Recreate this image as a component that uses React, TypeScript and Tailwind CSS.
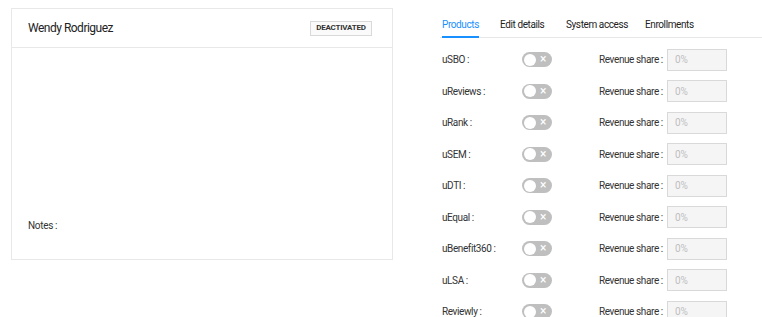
import React from "react";

const products = ["uSBO", "uReviews", "uRank", "uSEM", "uDTI", "uEqual", "uBenefit360", "uLSA", "Reviewly"];

function Toggle() {
  return (
    <div className="relative h-[15px] w-[30px] rounded-full bg-[#bfbfbf]">
      <div className="absolute left-[1.5px] top-[1.5px] h-[12px] w-[12px] rounded-full bg-white" />
      <span className="absolute right-[6px] top-0 text-[12px] leading-[14px] text-white">×</span>
    </div>
  );
}

export default function App() {
  const font = { fontFamily: "Roboto, 'Liberation Sans', sans-serif" };
  return (
    <div className="flex h-[317px] w-[762px] overflow-hidden bg-white text-[#333]" style={font}>
      <div className="ml-[11px] mt-[8px] flex h-[252px] w-[382px] shrink-0 flex-col border border-[#e8e8e8] bg-white">
        <div className="flex h-[39px] shrink-0 items-center justify-between border-b border-[#e8e8e8] pl-[16px] pr-[20px]">
          <span className="text-[12px] tracking-[-0.5px] text-[#222]">Wendy Rodriguez</span>
          <span className="flex h-[15px] w-[62px] items-center justify-center border border-[#d9d9d9] bg-[#fafafa] text-[8px] font-bold tracking-[-0.2px] text-[#333]">
            DEACTIVATED
          </span>
        </div>
        <div className="flex flex-1 flex-col justify-end pb-[26px] pl-[16px]">
          <span className="text-[10px] tracking-[-0.3px] text-[#333]">
            Notes<span className="ml-[2px]">:</span>
          </span>
        </div>
      </div>
      <div className="ml-[47px] flex min-w-0 flex-1 flex-col">
        <div className="flex h-[38px] shrink-0 border-b border-[#e8e8e8] pl-[2px] text-[10px] tracking-[-0.4px] text-[#222]">
          <div className="relative flex w-[58px] items-end pb-[5px] text-[#1890ff]">
            Products
            <div className="absolute bottom-[-1px] left-0 h-[2px] w-[37px] bg-[#1890ff]" />
          </div>
          <div className="flex w-[66px] items-end pb-[5px]">Edit details</div>
          <div className="flex w-[79px] items-end pb-[5px]">System access</div>
          <div className="flex items-end pb-[5px]">Enrollments</div>
        </div>
        <div className="mt-[6px] flex shrink-0 flex-col pl-[2px]">
          {products.map((p) => (
            <div key={p} className="flex h-[31.5px] shrink-0 items-center whitespace-nowrap text-[10px] tracking-[-0.4px] text-[#333]">
              <div className="w-[80px]">
                {p}
                <span className="ml-[2px]">:</span>
              </div>
              <div className="w-[77px]">
                <Toggle />
              </div>
              <div className="w-[68px]">
                Revenue share<span className="ml-[2px]">:</span>
              </div>
              <div className="flex h-[22px] w-[60px] items-center border border-[#d9d9d9] bg-[#f5f5f5] pl-[7px] text-[10px] tracking-[-0.2px] text-[#bfbfbf]">
                0%
              </div>
            </div>
          ))}
        </div>
      </div>
    </div>
  );
}
